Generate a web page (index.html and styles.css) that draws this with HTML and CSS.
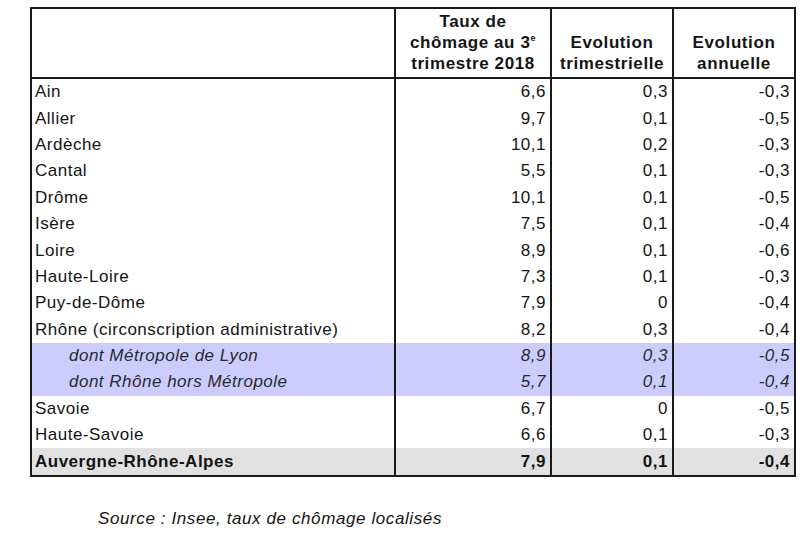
FILE: index.html
```html
<!DOCTYPE html>
<html lang="fr">
<head>
<meta charset="utf-8">
<link rel="stylesheet" href="styles.css">
</head>
<body>
<div class="page">
<table class="rates">
  <colgroup>
    <col class="c-name">
    <col class="c-rate">
    <col class="c-tri">
    <col class="c-ann">
  </colgroup>
  <thead>
    <tr>
      <th></th>
      <th>Taux de<br>chômage au 3<sup>e</sup><br>trimestre 2018</th>
      <th>Evolution<br>trimestrielle</th>
      <th class="last">Evolution<br>annuelle</th>
    </tr>
  </thead>
  <tbody>
    <tr><td class="name">Ain</td><td>6,6</td><td>0,3</td><td class="last">-0,3</td></tr>
    <tr><td class="name">Allier</td><td>9,7</td><td>0,1</td><td class="last">-0,5</td></tr>
    <tr><td class="name">Ardèche</td><td>10,1</td><td>0,2</td><td class="last">-0,3</td></tr>
    <tr><td class="name">Cantal</td><td>5,5</td><td>0,1</td><td class="last">-0,3</td></tr>
    <tr><td class="name">Drôme</td><td>10,1</td><td>0,1</td><td class="last">-0,5</td></tr>
    <tr><td class="name">Isère</td><td>7,5</td><td>0,1</td><td class="last">-0,4</td></tr>
    <tr><td class="name">Loire</td><td>8,9</td><td>0,1</td><td class="last">-0,6</td></tr>
    <tr><td class="name">Haute-Loire</td><td>7,3</td><td>0,1</td><td class="last">-0,3</td></tr>
    <tr><td class="name">Puy-de-Dôme</td><td>7,9</td><td>0</td><td class="last">-0,4</td></tr>
    <tr><td class="name">Rhône (circonscription administrative)</td><td>8,2</td><td>0,3</td><td class="last">-0,4</td></tr>
    <tr class="sub"><td class="name">dont Métropole de Lyon</td><td>8,9</td><td>0,3</td><td class="last">-0,5</td></tr>
    <tr class="sub"><td class="name">dont Rhône hors Métropole</td><td>5,7</td><td>0,1</td><td class="last">-0,4</td></tr>
    <tr><td class="name">Savoie</td><td>6,7</td><td>0</td><td class="last">-0,5</td></tr>
    <tr><td class="name">Haute-Savoie</td><td>6,6</td><td>0,1</td><td class="last">-0,3</td></tr>
    <tr class="total"><td class="name">Auvergne-Rhône-Alpes</td><td>7,9</td><td>0,1</td><td class="last">-0,4</td></tr>
  </tbody>
</table>
<p class="source">Source : Insee, taux de chômage localisés</p>
</div>
</body>
</html>
```

FILE: styles.css
```css
html, body {
  margin: 0;
  padding: 0;
  background: #ffffff;
}

.page {
  padding: 7px 0 0 30px;
  font-family: "Liberation Sans", Arial, sans-serif;
  color: #141414;
}

.rates {
  border-collapse: separate;
  border-spacing: 0;
  border: 2px solid #1a1a1a;
  table-layout: fixed;
  width: 766px;
  font-size: 17px;
  letter-spacing: 0.5px;
}

.c-name { width: 364px; }
.c-rate { width: 156px; }
.c-tri { width: 122px; }
.c-ann { width: 120px; }

.rates th {
  height: 65px;
  padding: 0 0 3px 0;
  vertical-align: bottom;
  text-align: center;
  font-weight: bold;
  line-height: 21px;
  letter-spacing: 0.6px;
  border-right: 2px solid #1a1a1a;
  border-bottom: 2px solid #1a1a1a;
}

.rates th sup {
  font-size: 9px;
  line-height: 0;
  vertical-align: 7px;
}

.rates td {
  height: 26.4px;
  padding: 0 4px 0 0;
  text-align: right;
  vertical-align: middle;
  line-height: 18px;
  border-right: 2px solid #1a1a1a;
}

.rates .last {
  border-right: none;
}

.rates td.name {
  text-align: left;
  padding: 0 0 0 3px;
}

.rates tr.sub td {
  background: #ccccff;
  font-style: italic;
  color: #2a2a2a;
}

.rates tr.sub td.name {
  padding-left: 37px;
}

.rates tr.total td {
  background: #e1e1e1;
  font-weight: bold;
}

.source {
  margin: 32px 0 0 68px;
  font-size: 17px;
  letter-spacing: 0.6px;
  font-style: italic;
}
```
